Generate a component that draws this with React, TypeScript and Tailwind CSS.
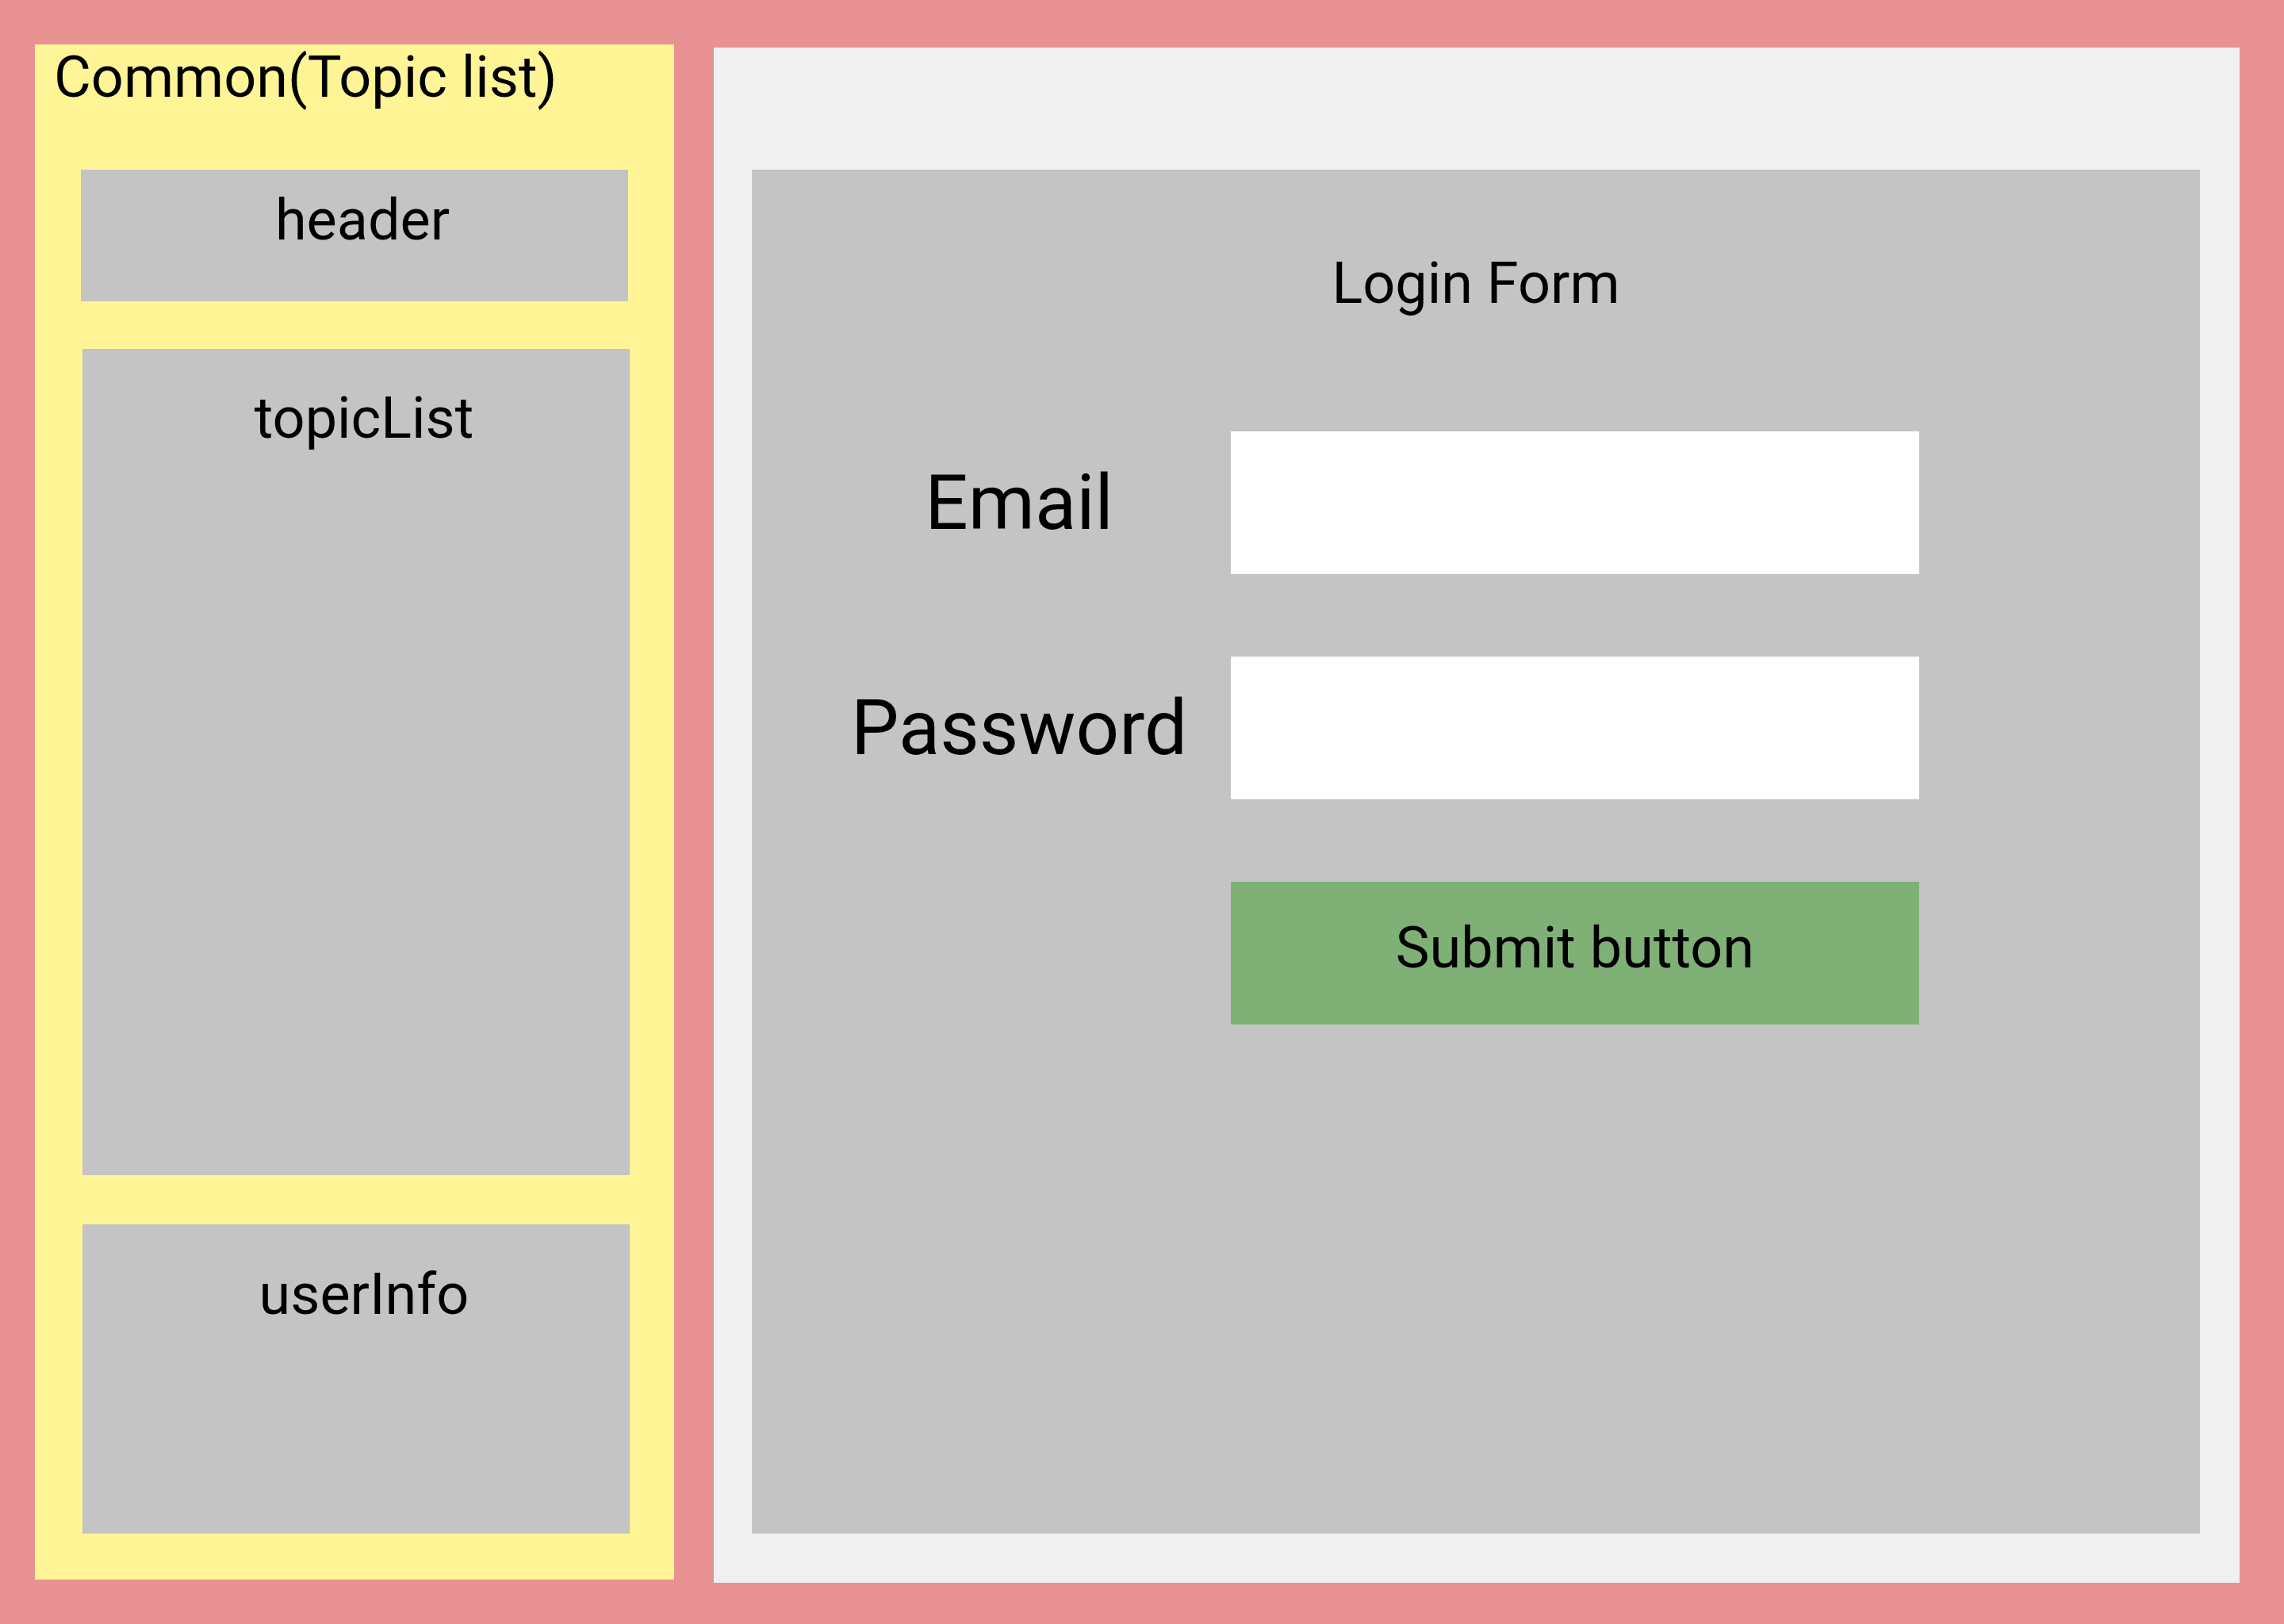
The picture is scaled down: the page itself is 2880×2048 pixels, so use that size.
export default function App() {
  return (
    <div className="w-[2880px] h-[2048px] bg-[#e89294] flex items-start pt-[56px] pl-[44px] gap-[50px] font-['Roboto',_'Noto_Sans',_sans-serif] text-black overflow-hidden">
      {/* left: common topic list */}
      <aside className="w-[806px] h-[1936px] bg-[#fff496] flex flex-col">
        <h1 className="mt-[6px] ml-[24px] text-[72px] leading-[72px]">Common(Topic list)</h1>
        <div className="mt-[80px] ml-[58px] w-[690px] h-[166px] bg-[#c4c4c4] flex justify-center">
          <span className="mt-[28px] ml-[20px] text-[72px] leading-[72px]">header</span>
        </div>
        <div className="mt-[60px] ml-[60px] w-[690px] h-[1042px] bg-[#c4c4c4] flex justify-center">
          <span className="mt-[52px] ml-[20px] text-[72px] leading-[72px]">topicList</span>
        </div>
        <div className="mt-[62px] ml-[60px] w-[690px] h-[390px] bg-[#c4c4c4] flex justify-center">
          <span className="mt-[53px] ml-[20px] text-[72px] leading-[72px]">userInfo</span>
        </div>
      </aside>

      {/* right: login */}
      <main className="mt-[4px] w-[1924px] h-[1936px] bg-[#f0f0f0] pt-[154px] pl-[48px]">
        <div className="w-[1826px] h-[1720px] bg-[#c4c4c4] flex flex-col">
          <h2 className="mt-[108px] text-center text-[72px] leading-[72px]">Login Form</h2>
          <div className="mt-[150px] ml-[70px] flex flex-col gap-[104px]">
            <div className="flex items-center">
              <label className="w-[534px] text-center text-[96px] leading-[96px]">Email</label>
              <div className="w-[868px] h-[180px] bg-white" />
            </div>
            <div className="flex items-center">
              <label className="w-[534px] text-center text-[96px] leading-[96px]">Password</label>
              <div className="w-[868px] h-[180px] bg-white" />
            </div>
            <div className="flex items-center">
              <div className="w-[534px]" />
              <button className="w-[868px] h-[180px] bg-[#7fb177] text-[72px] leading-[72px] pb-[12px]">
                Submit button
              </button>
            </div>
          </div>
        </div>
      </main>
    </div>
  );
}
